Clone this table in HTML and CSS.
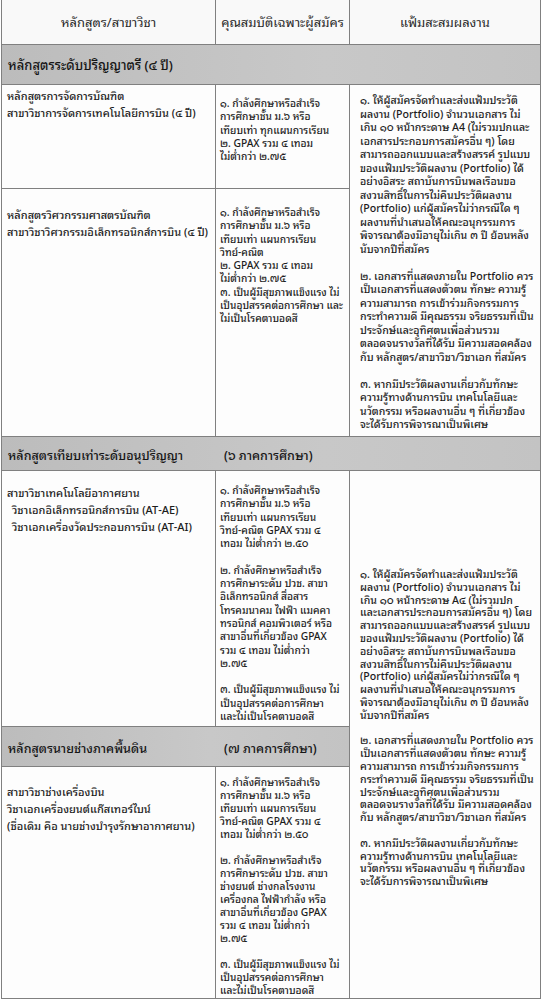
FILE: index.html
```html
<!DOCTYPE html>
<html lang="th">
<head>
<meta charset="utf-8">
<title>หลักสูตร/สาขาวิชา</title>
<link rel="stylesheet" href="styles.css">
</head>
<body>
<div class="table">
  <div class="cell head c1">หลักสูตร/สาขาวิชา</div>
  <div class="cell head c2">คุณสมบัติเฉพาะผู้สมัคร</div>
  <div class="cell head c3">แฟ้มสะสมผลงาน</div>

  <div class="cell section sec1">หลักสูตรระดับปริญญาตรี (๔ ปี)</div>

  <div class="cell prog r1">
    <p>หลักสูตรการจัดการบัณฑิต<br>สาขาวิชาการจัดการเทคโนโลยีการบิน (๔ ปี)</p>
  </div>
  <div class="cell qual r1q">
    <p>๑. กำลังศึกษาหรือสำเร็จ<br>การศึกษาชั้น ม.๖ หรือ<br>เทียบเท่า ทุกแผนการเรียน<br>๒. GPAX รวม ๔ เทอม<br>ไม่ต่ำกว่า ๒.๗๕</p>
  </div>
  <div class="cell port port-top">
    <p>๑. ให้ผู้สมัครจัดทำและส่งแฟ้มประวัติ<br>ผลงาน (Portfolio) จำนวนเอกสาร ไม่<br>เกิน ๑๐ หน้ากระดาษ A4 (ไม่รวมปกและ<br>เอกสารประกอบการสมัครอื่น ๆ) โดย<br>สามารถออกแบบและสร้างสรรค์ รูปแบบ<br>ของแฟ้มประวัติผลงาน (Portfolio) ได้<br>อย่างอิสระ สถาบันการบินพลเรือนขอ<br>สงวนสิทธิ์ในการไม่คืนประวัติผลงาน<br>(Portfolio) แก่ผู้สมัครไม่ว่ากรณีใด ๆ<br>ผลงานที่นำเสนอให้คณะอนุกรรมการ<br>พิจารณาต้องมีอายุไม่เกิน ๓ ปี ย้อนหลัง<br>นับจากปีที่สมัคร</p>
    <p>๒. เอกสารที่แสดงภายใน Portfolio ควร<br>เป็นเอกสารที่แสดงตัวตน ทักษะ ความรู้<br>ความสามารถ การเข้าร่วมกิจกรรมการ<br>กระทำความดี มีคุณธรรม จริยธรรมที่เป็น<br>ประจักษ์และอุทิศตนเพื่อส่วนรวม<br>ตลอดจนรางวัลที่ได้รับ มีความสอดคล้อง<br>กับ หลักสูตร/สาขาวิชา/วิชาเอก ที่สมัคร</p>
    <p>๓. หากมีประวัติผลงานเกี่ยวกับทักษะ<br>ความรู้ทางด้านการบิน เทคโนโลยีและ<br>นวัตกรรม หรือผลงานอื่น ๆ ที่เกี่ยวข้อง<br>จะได้รับการพิจารณาเป็นพิเศษ</p>
  </div>

  <div class="cell prog r2">
    <p>หลักสูตรวิศวกรรมศาสตรบัณฑิต<br>สาขาวิชาวิศวกรรมอิเล็กทรอนิกส์การบิน (๔ ปี)</p>
  </div>
  <div class="cell qual r2q">
    <p>๑. กำลังศึกษาหรือสำเร็จ<br>การศึกษาชั้น ม.๖ หรือ<br>เทียบเท่า แผนการเรียน<br>วิทย์-คณิต<br>๒. GPAX รวม ๔ เทอม<br>ไม่ต่ำกว่า ๒.๗๕<br>๓. เป็นผู้มีสุขภาพแข็งแรง ไม่<br>เป็นอุปสรรคต่อการศึกษา และ<br>ไม่เป็นโรคตาบอดสี</p>
  </div>

  <div class="cell section sec2">
    <span class="sec-name">หลักสูตรเทียบเท่าระดับอนุปริญญา</span>
    <span class="sec-term">(๖ ภาคการศึกษา)</span>
  </div>

  <div class="cell prog r3">
    <p>สาขาวิชาเทคโนโลยีอากาศยาน</p>
    <p class="indent">วิชาเอกอิเล็กทรอนิกส์การบิน (AT-AE)<br>วิชาเอกเครื่องวัดประกอบการบิน (AT-AI)</p>
  </div>
  <div class="cell qual r3q">
    <p>๑. กำลังศึกษาหรือสำเร็จ<br>การศึกษาชั้น ม.๖ หรือ<br>เทียบเท่า แผนการเรียน<br>วิทย์-คณิต GPAX รวม ๔<br>เทอม ไม่ต่ำกว่า ๒.๕๐</p>
    <p>๒. กำลังศึกษาหรือสำเร็จ<br>การศึกษาระดับ ปวช. สาขา<br>อิเล็กทรอนิกส์ สื่อสาร<br>โทรคมนาคม ไฟฟ้า แมคคา<br>ทรอนิกส์ คอมพิวเตอร์ หรือ<br>สาขาอื่นที่เกี่ยวข้อง GPAX<br>รวม ๔ เทอม ไม่ต่ำกว่า<br>๒.๗๕</p>
    <p>๓. เป็นผู้มีสุขภาพแข็งแรง ไม่<br>เป็นอุปสรรคต่อการศึกษา<br>และไม่เป็นโรคตาบอดสี</p>
  </div>
  <div class="cell port port-bottom">
    <p>๑. ให้ผู้สมัครจัดทำและส่งแฟ้มประวัติ<br>ผลงาน (Portfolio) จำนวนเอกสาร ไม่<br>เกิน ๑๐ หน้ากระดาษ A๔ (ไม่รวมปก<br>และเอกสารประกอบการสมัครอื่น ๆ) โดย<br>สามารถออกแบบและสร้างสรรค์ รูปแบบ<br>ของแฟ้มประวัติผลงาน (Portfolio) ได้<br>อย่างอิสระ สถาบันการบินพลเรือนขอ<br>สงวนสิทธิ์ในการไม่คืนประวัติผลงาน<br>(Portfolio) แก่ผู้สมัครไม่ว่ากรณีใด ๆ<br>ผลงานที่นำเสนอให้คณะอนุกรรมการ<br>พิจารณาต้องมีอายุไม่เกิน ๓ ปี ย้อนหลัง<br>นับจากปีที่สมัคร</p>
    <p>๒. เอกสารที่แสดงภายใน Portfolio ควร<br>เป็นเอกสารที่แสดงตัวตน ทักษะ ความรู้<br>ความสามารถ การเข้าร่วมกิจกรรมการ<br>กระทำความดี มีคุณธรรม จริยธรรมที่เป็น<br>ประจักษ์และอุทิศตนเพื่อส่วนรวม<br>ตลอดจนรางวัลที่ได้รับ มีความสอดคล้อง<br>กับ หลักสูตร/สาขาวิชา/วิชาเอก ที่สมัคร</p>
    <p>๓. หากมีประวัติผลงานเกี่ยวกับทักษะ<br>ความรู้ทางด้านการบิน เทคโนโลยีและ<br>นวัตกรรม หรือผลงานอื่น ๆ ที่เกี่ยวข้อง<br>จะได้รับการพิจารณาเป็นพิเศษ</p>
  </div>

  <div class="cell section sec3">
    <span class="sec-name">หลักสูตรนายช่างภาคพื้นดิน</span>
    <span class="sec-term">(๗ ภาคการศึกษา)</span>
  </div>

  <div class="cell prog r4">
    <p>สาขาวิชาช่างเครื่องบิน<br>วิชาเอกเครื่องยนต์แก๊สเทอร์ไบน์<br>(ชื่อเดิม คือ นายช่างบำรุงรักษาอากาศยาน)</p>
  </div>
  <div class="cell qual r4q">
    <p>๑. กำลังศึกษาหรือสำเร็จ<br>การศึกษาชั้น ม.๖ หรือ<br>เทียบเท่า แผนการเรียน<br>วิทย์-คณิต GPAX รวม ๔<br>เทอม ไม่ต่ำกว่า ๒.๕๐</p>
    <p>๒. กำลังศึกษาหรือสำเร็จ<br>การศึกษาระดับ ปวช. สาขา<br>ช่างยนต์ ช่างกลโรงงาน<br>เครื่องกล ไฟฟ้ากำลัง หรือ<br>สาขาอื่นที่เกี่ยวข้อง GPAX<br>รวม ๔ เทอม ไม่ต่ำกว่า<br>๒.๗๕</p>
    <p>๓. เป็นผู้มีสุขภาพแข็งแรง ไม่<br>เป็นอุปสรรคต่อการศึกษา<br>และไม่เป็นโรคตาบอดสี</p>
  </div>
</div>
</body>
</html>
```

FILE: styles.css
```css
html, body {
  margin: 0;
  padding: 0;
  background: #ffffff;
}

body {
  font-family: "Noto Sans Thai Looped", "Noto Sans Thai", "Noto Sans", "DejaVu Sans", sans-serif;
  color: #1c1c1c;
  font-size: 11px;
  font-weight: 500;
  width: 542px;
  height: 1000px;
  overflow: hidden;
}

.table {
  margin-left: 1px;
  width: 538px;
  padding: 0 1px 1px 1px;
  background: #808080;
  display: grid;
  grid-template-columns: 213px 133px 190px;
  grid-template-rows: 44px 39px 103px 247px 33px 255px 39px 231px;
  gap: 1px;
}

.cell {
  background: #fdfdfd;
  white-space: nowrap;
  overflow: hidden;
}

.cell p {
  margin: 0;
}

.head {
  display: flex;
  align-items: center;
  justify-content: center;
  font-size: 13px;
  font-weight: 400;
  color: #2a2a2a;
  background: #f9f9f9;
  padding-bottom: 2px;
}

.section {
  background: linear-gradient(to right, #bcbcbc, #c8c8c8 60%, #c3c3c3);
  display: flex;
  align-items: center;
  padding-left: 6px;
  font-size: 12.5px;
  color: #161616;
}

.sec1 { grid-column: 1 / 4; grid-row: 2; font-size: 13px; }
.sec2 { grid-column: 1 / 4; grid-row: 5; }
.sec3 { grid-column: 1 / 3; grid-row: 7; }

.sec-name {
  width: 216px;
}

.prog {
  grid-column: 1;
  padding-left: 5px;
  line-height: 17px;
}

.prog .indent {
  padding-left: 5px;
}

.qual {
  grid-column: 2;
  padding-left: 4px;
  font-size: 10.2px;
  line-height: 13.3px;
}

.qual p + p {
  margin-top: 13.3px;
}

.port {
  grid-column: 3;
  padding-left: 10px;
  font-size: 10.6px;
}

.port-top {
  grid-row: 3 / 5;
  padding-top: 8px;
  line-height: 13.5px;
}

.port-top p + p {
  margin-top: 13.5px;
}

.port-bottom {
  grid-row: 6 / 9;
  padding-top: 97px;
  line-height: 12.8px;
}

.port-bottom p + p {
  margin-top: 12.8px;
}

.r1 { grid-row: 3; padding-top: 2px; }
.r1q { grid-row: 3; padding-top: 11px; }
.r2 { grid-row: 4; padding-top: 17px; }
.r2q { grid-row: 4; padding-top: 16px; }
.r3 { grid-row: 6; padding-top: 13px; }
.r3q { grid-row: 6; padding-top: 12px; }
.r4 { grid-row: 8; padding-top: 16px; }
.r4q { grid-row: 8; padding-top: 8px; line-height: 13px; }
.r4q p + p { margin-top: 13px; }
```
